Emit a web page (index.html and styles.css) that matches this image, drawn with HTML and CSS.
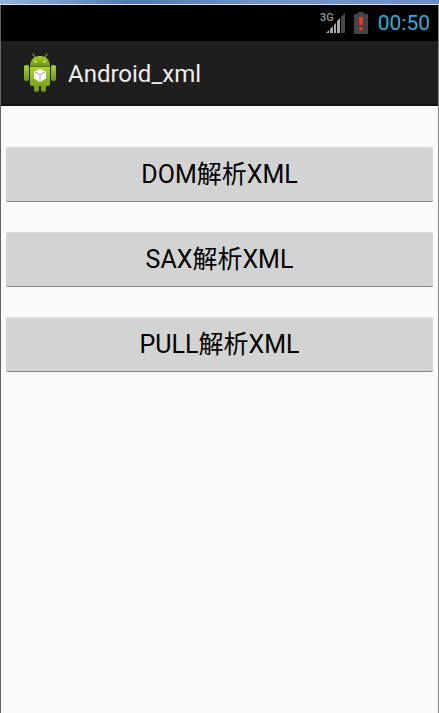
FILE: index.html
```html
<!DOCTYPE html>
<html lang="zh-CN">
<head>
<meta charset="utf-8">
<meta name="viewport" content="width=device-width, initial-scale=1">
<title>Android_xml</title>
<link rel="stylesheet" href="styles.css">
</head>
<body>
<div class="window">
  <div class="window-edge"></div>
  <div class="status-bar">
    <svg class="signal" width="26" height="22" viewBox="0 0 26 22" aria-hidden="true">
      <text class="network" x="0" y="9">3G</text>
      <path fill="#a8a8a8" d="M6 21 L9 18 V21Z M10 17 L13 14 V21H10Z M14 13 L16 11 V21H14Z M17 9 L20 6 V21H17Z"/>
      <path fill="#484848" d="M21 5 L25 1 V21H21Z"/>
    </svg>
    <svg class="battery" width="14" height="22" viewBox="0 0 14 22" aria-hidden="true">
      <path fill="#444" d="M4 0H10V2H14V22H0V2H4Z"/>
      <path fill="#f3381d" d="M5 5H9L8.500 13H5.500Z M5.500 15H8.500V18H5.500Z"/>
    </svg>
    <time class="clock">00:50</time>
  </div>
  <header class="action-bar">
    <svg class="app-icon" width="34" height="40" viewBox="0 0 34 40" aria-hidden="true">
      <defs>
        <linearGradient id="green" x1="0" y1="0" x2="0" y2="1">
          <stop offset="0" stop-color="#b0d12c"/>
          <stop offset="1" stop-color="#6d961b"/>
        </linearGradient>
      </defs>
      <path d="M10 1L13 6M24 1L21 6" stroke="#87a82a" stroke-width="1.200" stroke-linecap="round"/>
      <path fill="url(#green)" d="M7 13C7 7 11 3 17 3S27 7 27 13Z"/>
      <g fill="url(#green)">
        <rect x="1" y="12" width="5" height="16" rx="2"/>
        <rect x="28" y="12" width="5" height="16" rx="2"/>
        <path d="M7 14H27V31Q27 33 25 33H23V37Q23 39 20.500 39T18 37V33H16V37Q16 39 13.500 39T11 37V33H9Q7 33 7 31Z"/>
      </g>
      <path d="M7 13.500H27" stroke="#567713"/>
      <circle cx="12.500" cy="8.500" r="1" fill="#f1f5dc"/>
      <circle cx="21.500" cy="8.500" r="1" fill="#f1f5dc"/>
      <path fill="#fff" d="M17 16L23 18.500V25.500L17 29L11 25.500V18.500Z"/>
      <path d="M11.500 19L17 21.500L22.500 19M17 21.500V28" fill="none" stroke="#a6ad93" stroke-width="1"/>
    </svg>
    <h1 class="title">Android_xml</h1>
  </header>
  <main class="content">
    <button class="action" type="button">DOM解析XML</button>
    <button class="action" type="button">SAX解析XML</button>
    <button class="action" type="button">PULL解析XML</button>
  </main>
</div>
</body>
</html>
```
FILE: styles.css
```css
* {
  box-sizing: border-box;
}

body {
  margin: 0;
  font-family: Roboto, "Noto Sans CJK SC", sans-serif;
}

.window {
  display: flex;
  flex-direction: column;
  min-height: 100vh;
  background: #fafafa;
  border-left: 1px solid #5d636b;
  border-right: 1px solid #858585;
}

.window-edge {
  height: 5px;
  margin: 0 -1px;
  background: linear-gradient(90deg, #95b4dc, #4c79b8 30%, #6f93ca 60%, #6b8fc9);
  border-bottom: 1px solid #dce5f0;
}

.status-bar {
  display: flex;
  align-items: center;
  justify-content: flex-end;
  height: 36px;
  padding-right: 8px;
  background: #000;
}

.network {
  font-size: 11px;
  font-weight: 500;
  fill: #999;
}

.battery {
  margin: 0 10px 0 8px;
}

.clock {
  color: #35abd9;
  font-size: 21px;
  line-height: 36px;
}

.action-bar {
  display: flex;
  align-items: center;
  gap: 11px;
  height: 65px;
  padding-left: 22px;
  background: #1e1e1e;
  border-bottom: 2px solid #111;
}

.title {
  margin: 0;
  padding-top: 2px;
  color: #eee;
  font-size: 24px;
  font-weight: 400;
  line-height: 32px;
}

.content {
  display: flex;
  flex: 1;
  flex-direction: column;
  gap: 30px;
  padding: 41px 5px;
}

.action {
  height: 55px;
  padding: 0;
  color: #000;
  font: inherit;
  font-size: 25px;
  line-height: 32px;
  background: #d3d3d3;
  border: 0;
  border-top: 1px solid #dedede;
  border-bottom: 1px solid #858585;
  border-radius: 2px;
}
```
